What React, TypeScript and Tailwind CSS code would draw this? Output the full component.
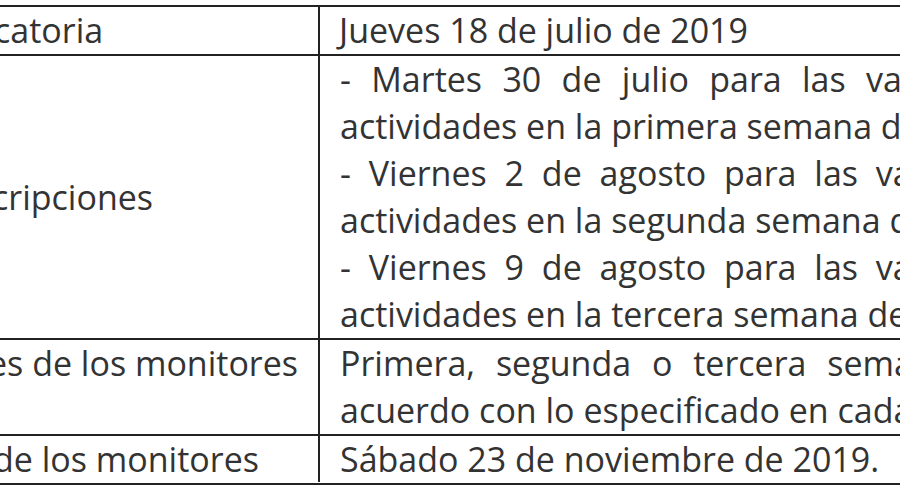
import React from "react";

const font = { fontFamily: "'Open Sans', Lato, sans-serif" };

export default function App() {
  return (
    <div className="w-[900px] h-[490px] bg-white overflow-hidden pt-[5px]" style={font}>
      <div className="w-[1100px] border-y-2 border-[#222] text-[34px] leading-[47px] text-[#333]">
        <div className="flex border-b-2 border-[#222]">
          <div className="w-[320px] shrink-0 border-r-2 border-[#222] h-[47px] whitespace-nowrap overflow-hidden">
            <span className="block ml-[-6px]">catoria</span>
          </div>
          <div className="pl-[19px] whitespace-nowrap">Jueves 18 de julio de 2019</div>
        </div>
        <div className="flex border-b-2 border-[#222]">
          <div className="w-[320px] shrink-0 border-r-2 border-[#222] flex items-center whitespace-nowrap overflow-hidden">
            <span className="block ml-[-8px]">cripciones</span>
          </div>
          <div className="pl-[20px] whitespace-nowrap">
            <div className="[word-spacing:11.5px]">- Martes 30 de julio para las vacantes de</div>
            <div>actividades en la primera semana de</div>
            <div className="[word-spacing:9px]">- Viernes 2 de agosto para las vacantes de</div>
            <div>actividades en la segunda semana de</div>
            <div className="[word-spacing:9px]">- Viernes 9 de agosto para las vacantes de</div>
            <div>actividades en la tercera semana de</div>
          </div>
        </div>
        <div className="flex border-b-2 border-[#222]">
          <div className="w-[320px] shrink-0 border-r-2 border-[#222] whitespace-nowrap overflow-hidden">
            <span className="block ml-[-12px]">es de los monitores</span>
          </div>
          <div className="pl-[20px] whitespace-nowrap">
            <div className="[word-spacing:12px]">Primera, segunda o tercera semana de</div>
            <div>acuerdo con lo especificado en cada</div>
          </div>
        </div>
        <div className="flex">
          <div className="w-[320px] shrink-0 border-r-2 border-[#222] h-[46px] whitespace-nowrap overflow-hidden">
            <span className="block ml-[-7px]">de los monitores</span>
          </div>
          <div className="pl-[20px] whitespace-nowrap">Sábado 23 de noviembre de 2019.</div>
        </div>
      </div>
    </div>
  );
}
